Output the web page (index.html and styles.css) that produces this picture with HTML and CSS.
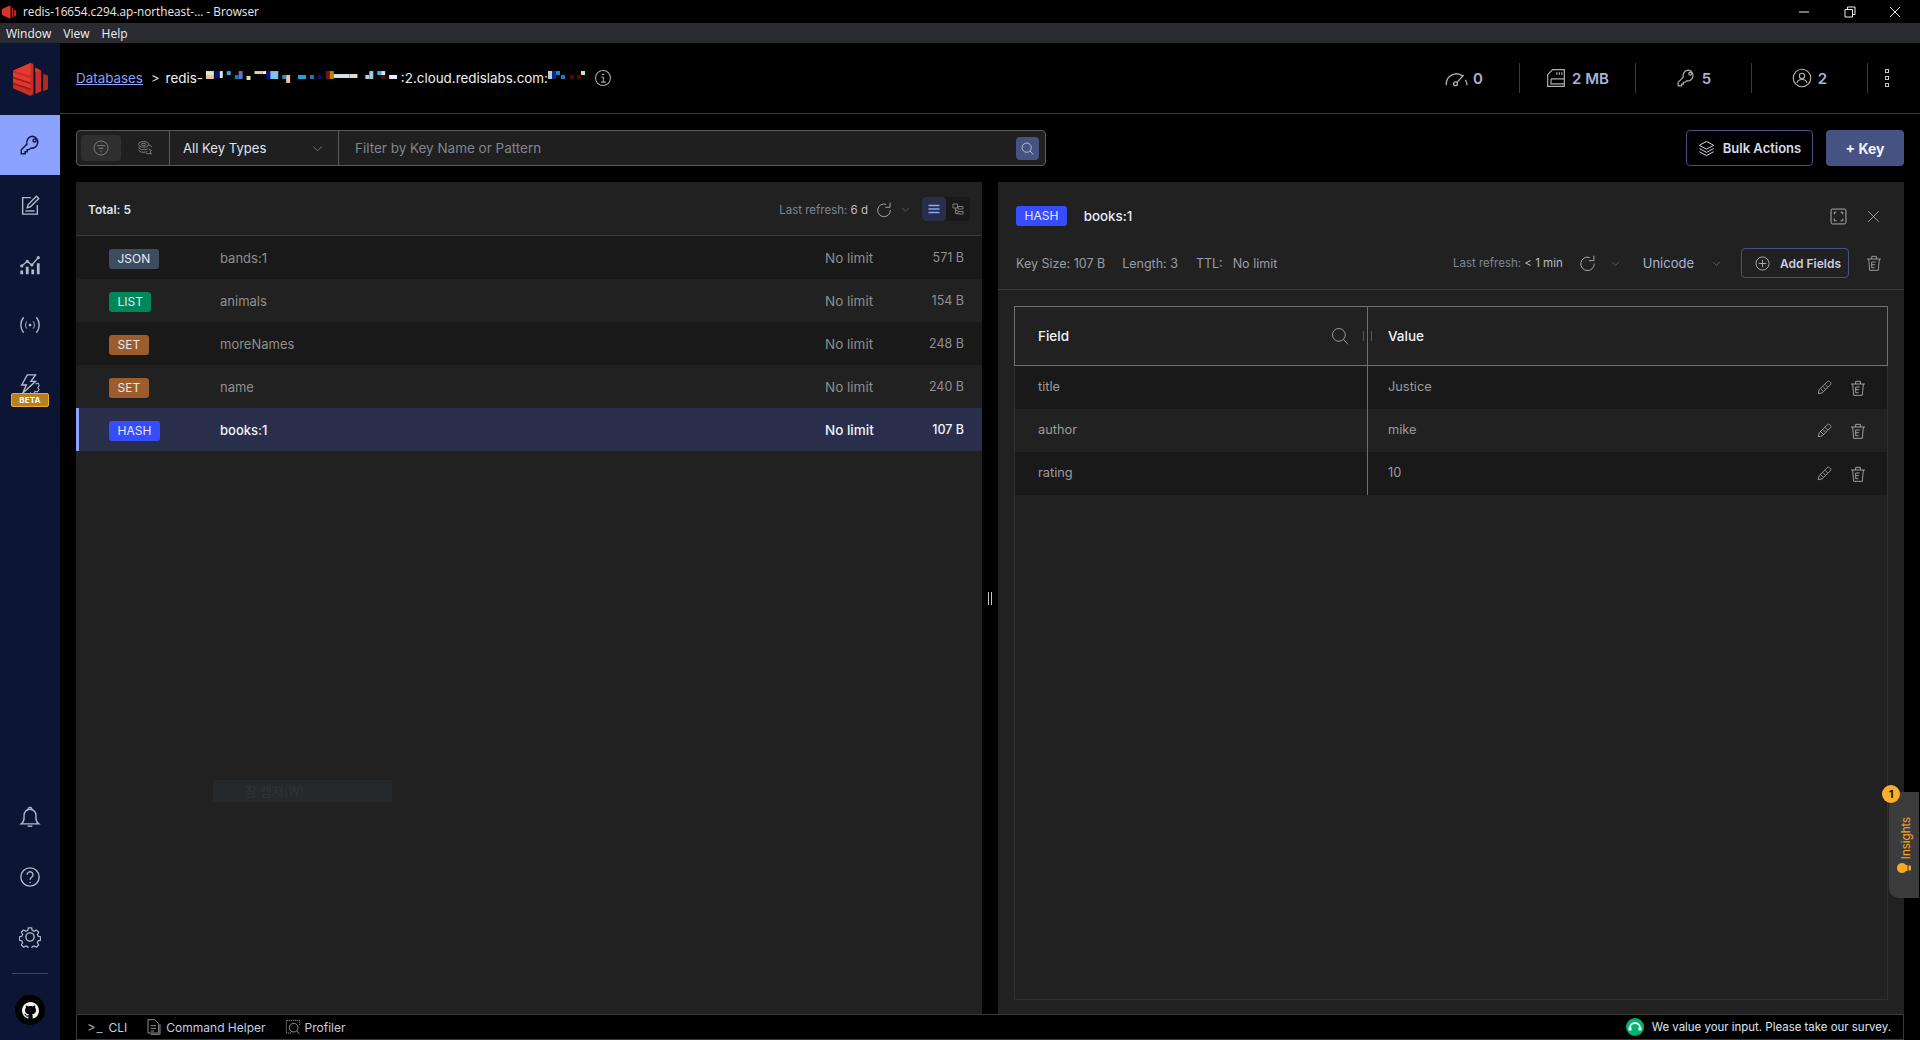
FILE: index.html
```html
<!DOCTYPE html>
<html lang="en">
<head>
<meta charset="utf-8">
<title>Browser</title>
<link rel="stylesheet" href="styles.css">
</head>
<body>
<svg class="defs" xmlns="http://www.w3.org/2000/svg">
  <symbol id="i-key" viewBox="0 0 24 24"><path d="M15 2.500a6.500 6.500 0 0 0-6.200 8.500L2.500 17.300v4.200h4.200v-2.200h2.200v-2.200h2.200l1.700-1.700A6.500 6.500 0 1 0 15 2.500z"/><circle cx="17" cy="7" r="1.700"/></symbol>
  <symbol id="i-edit" viewBox="0 0 24 24"><path d="M13 4H4v18h16v-10"/><path d="M9 15l1-3.500L19 2.500l2.500 2.500-9 9z"/><path d="M7 18.500h10"/></symbol>
  <symbol id="i-chart" viewBox="0 0 24 24"><path d="M3 13l6-5 5 4 7-8"/><circle cx="3" cy="13" r="1"/><circle cx="9" cy="8" r="1"/><circle cx="14" cy="12" r="1"/><circle cx="21" cy="4" r="1"/><path class="thick" d="M3 18v4M9 14v8M15 17v5M21 10v12"/></symbol>
  <symbol id="i-pubsub" viewBox="0 0 24 24"><path d="M5 3.500C1 8.500 1 15.500 5 20.500M19 3.500c4 5 4 12 0 17"/><path d="M8.500 8c-1.800 2.500-1.800 5.500 0 8M15.500 8c1.800 2.500 1.800 5.500 0 8" stroke-width="1"/><circle cx="12" cy="12" r="1.500" class="fill"/></symbol>
  <symbol id="i-bolt" viewBox="0 0 24 24"><path d="M9 1h9l-5 7h5L4 21l4-9H3z"/><path d="M18 11l3-1 1 3-1.500 2 1.500 2-2 2.500-2.500-.5-1.500 2.500h-3l-.5-1.500" stroke-width="1.100"/></symbol>
  <symbol id="i-bell" viewBox="0 0 24 24"><path d="M2.500 19.500c2-1.500 3-3 3-6.500V10a6.500 6.500 0 0 1 13 0v3c0 3.500 1 5 3 6.500z"/><path d="M10 3.500a2 2 0 0 1 4 0"/><path d="M9.500 22h5"/></symbol>
  <symbol id="i-help" viewBox="0 0 24 24"><circle cx="12" cy="12" r="10"/><path d="M8.800 9.500a3.200 3.200 0 1 1 5 2.700c-1.100.8-1.800 1.400-1.800 2.800"/><path d="M12 17.500v1"/></symbol>
  <symbol id="i-gear" viewBox="0 0 24 24"><path d="M10 1.500h4l.7 3 2.300 1 2.700-1.600 2.800 2.800-1.600 2.700 1 2.300 3 .7v4l-3 .7-1 2.300 1.600 2.700-2.800 2.800-2.700-1.600-2.300 1-.7 3h-4l-.7-3-2.300-1-2.700 1.600-2.800-2.800 1.600-2.700-1-2.300-3-.7v-4l3-.7 1-2.300-1.600-2.700 2.800-2.800 2.700 1.600 2.300-1z" transform="translate(12 12) scale(.9) translate(-12 -12.500)"/><circle cx="12" cy="12" r="4.500"/></symbol>
  <symbol id="i-github" viewBox="0 0 16 16"><path class="fill" d="M8 0C3.580 0 0 3.580 0 8c0 3.540 2.290 6.530 5.470 7.590.4.070.55-.17.55-.38 0-.19-.01-.82-.01-1.490-2.010.37-2.530-.49-2.690-.94-.09-.23-.48-.94-.82-1.130-.28-.15-.68-.52-.01-.53.63-.01 1.080.58 1.230.82.72 1.210 1.870.87 2.330.66.07-.52.28-.87.51-1.070-1.780-.2-3.640-.89-3.640-3.950 0-.87.31-1.590.82-2.150-.08-.2-.36-1.020.08-2.120 0 0 .67-.21 2.200.82.64-.18 1.320-.27 2-.27.68 0 1.360.09 2 .27 1.530-1.040 2.200-.82 2.200-.82.44 1.100.16 1.920.08 2.120.51.56.82 1.270.82 2.150 0 3.070-1.870 3.750-3.650 3.950.29.25.54.73.54 1.480 0 1.070-.01 1.930-.01 2.200 0 .21.15.46.55.38A8.013 8.013 0 0 0 16 8c0-4.420-3.580-8-8-8z"/></symbol>
  <symbol id="i-info" viewBox="0 0 24 24"><circle cx="12" cy="12" r="10"/><path d="M10 11h2.500v6.500M9.500 17.500h6"/><path d="M12 6.500v1.500" class="thick"/></symbol>
  <symbol id="i-gauge" viewBox="0 0 24 24"><path d="M1.500 19a10.500 10.500 0 0 1 17-9.500"/><path d="M19.500 8.500l-7 7.500"/><path d="M23 19c-.100-2-.8-4-1.800-5.500"/><circle cx="11" cy="17.500" r="2"/></symbol>
  <symbol id="i-mem" viewBox="0 0 24 24"><path d="M8 2h14v20H2V8z"/><path d="M6 13h16M6 13v6h16"/><path d="M13 5v3M16 5v3M19 5v3"/></symbol>
  <symbol id="i-user" viewBox="0 0 24 24"><circle cx="12" cy="12" r="10.500"/><circle cx="12" cy="9.500" r="3.200"/><path d="M6 18c.5-3 3-4.200 6-4.200s5.500 1.200 6 4.200"/></symbol>
  <symbol id="i-filter" viewBox="0 0 24 24"><circle cx="12" cy="12" r="10.500"/><path d="M6 8.500h12M8.500 12.500h7M11 16.500h2"/></symbol>
  <symbol id="i-coins" viewBox="0 0 24 24"><ellipse cx="10" cy="6.500" rx="7.500" ry="4"/><ellipse cx="10" cy="6.500" rx="3.500" ry="1.700"/><path d="M2.500 10.500c0 2.300 3.500 4 7.500 4 3 0 6-.8 7-2.200M2.500 14.500c0 2.300 3.500 4 7.500 4 2 0 4-.4 5.500-1.200"/><path d="M17.500 7.500c2.800.6 4.500 1.800 4.500 3.200M18 14l3.500 1.500-2 2.500 2.500 2.500H14"/></symbol>
  <symbol id="i-search" viewBox="0 0 24 24"><circle cx="10.500" cy="10.500" r="8.500"/><path d="M16.500 16.500l6 6.500"/></symbol>
  <symbol id="i-chev" viewBox="0 0 24 24"><path d="M3 8l9 9 9-9"/></symbol>
  <symbol id="i-layers" viewBox="0 0 24 24"><path d="M12 2l10 5.500L12 13 2 7.500z"/><path d="M2 12l10 5.500L22 12M2 16.500L12 22l10-5.500"/></symbol>
  <symbol id="i-refresh" viewBox="0 0 24 24"><path d="M15 3.500A9.500 9.500 0 1 0 21.500 12"/><path d="M21 1v7h-7"/></symbol>
  <symbol id="i-list" viewBox="0 0 24 24"><path class="thick" d="M1 5h22M1 12h22M1 19h22"/></symbol>
  <symbol id="i-tree" viewBox="0 0 24 24"><path d="M2 2h9v8H2zM7 10v11h5M7 15h5M12 7h10v5H12zM12 17h10v5H12z"/></symbol>
  <symbol id="i-expand" viewBox="0 0 24 24"><rect x="1.500" y="1.500" width="21" height="21" rx="2"/><path d="M6 9V6h3M15 6h3v3M18 15v3h-3M9 18H6v-3"/></symbol>
  <symbol id="i-x" viewBox="0 0 24 24"><path d="M2 2l20 20M22 2L2 22"/></symbol>
  <symbol id="i-plus" viewBox="0 0 24 24"><circle cx="12" cy="12" r="10.500"/><path d="M12 6v12M6 12h12"/></symbol>
  <symbol id="i-trash" viewBox="0 0 24 24"><path d="M1.500 6h21M8.500 6V2h7v4"/><path d="M4 6l1.500 17h13L20 6"/><path d="M8.500 10.500h6M8.500 10.500v8.500M8.500 14.500h5M8.500 19h4"/></symbol>
  <symbol id="i-pencil" viewBox="0 0 24 24"><path d="M16.500 2.500c1-1 2.500-1 3.500 0l1.500 1.500c1 1 1 2.500 0 3.500L8.500 20.500 2 22l1.500-6.500z"/><path d="M5.500 13.500l5 5M9.500 10.500l4 4M13 7l4 4"/></symbol>
  <symbol id="i-doc" viewBox="0 0 24 24"><path d="M3 1h10l6 6v14H3z"/><path d="M7 10h8M7 14h8M7 18h5"/><path d="M21 8v15H7"/></symbol>
  <symbol id="i-profiler" viewBox="0 0 24 24"><path d="M9 21H2V2h20v8" stroke-dasharray="2 1"/><circle cx="13" cy="13" r="6.500"/><path d="M18 18l4 5"/></symbol>
  <symbol id="i-bulb" viewBox="0 0 14 14"><path class="fill" d="M7 0a5 5 0 0 1 3 9v1.500H4V9a5 5 0 0 1 3-9zM4.500 11.500h5V13a1 1 0 0 1-1 1h-3a1 1 0 0 1-1-1z"/></symbol>
</svg>

<div class="titlebar">
  <svg class="title-logo" viewBox="0 0 36 34"><polygon points="0,9 20,0 22,2 22,32 20,34 0,25" fill="#d5342a"/><polygon points="25,5 29,8 29,30 25,32" fill="#b52a20"/><polygon points="31,11 36,13 36,27 31,29" fill="#b52a20"/></svg>
  <span class="title-text">redis-16654.c294.ap-northeast-... - Browser</span>
  <div class="winctl">
    <svg viewBox="0 0 12 12"><path d="M1 6h10"/></svg>
    <svg viewBox="0 0 12 12"><path d="M1 3.500h7.500V11H1zM3.500 3.500V1H11v7.500H8.500"/></svg>
    <svg viewBox="0 0 12 12"><path d="M1 1l10 10M11 1L1 11"/></svg>
  </div>
</div>
<div class="menubar"><span>Window</span><span>View</span><span>Help</span></div>

<div class="app">
  <nav class="sidebar">
    <div class="logo">
      <svg viewBox="0 0 36 34" class="logo-svg">
        <polygon points="0,8 18,0 21,1 21,32 18,34 0,26" fill="#c92e24"/>
        <polygon points="0,8 18,0 18,13" fill="#e63a2d"/>
        <polygon points="0,14 18,20 18,22 0,16" fill="#8f2018"/>
        <polygon points="0,20 18,26 18,28 0,22" fill="#8f2018"/>
        <polygon points="0,10 18,16 18,20 0,14" fill="#e63a2d"/>
        <polygon points="0,16 18,22 18,26 0,20" fill="#e03629"/>
        <polygon points="23,5 29,8 29,29 23,32" fill="#c92e24"/>
        <polygon points="23,5 29,8 23,9" fill="#e63a2d"/>
        <polygon points="31,11 36,13 36,27 31,29" fill="#b52a20"/>
      </svg>
    </div>
    <div class="nav-item active"><svg class="ico"><use href="#i-key"/></svg></div>
    <div class="nav-item"><svg class="ico"><use href="#i-edit"/></svg></div>
    <div class="nav-item"><svg class="ico"><use href="#i-chart"/></svg></div>
    <div class="nav-item"><svg class="ico"><use href="#i-pubsub"/></svg></div>
    <div class="nav-item beta-item"><svg class="ico"><use href="#i-bolt"/></svg><span class="beta">BETA</span></div>
    <div class="nav-spacer"></div>
    <div class="nav-item"><svg class="ico"><use href="#i-bell"/></svg></div>
    <div class="nav-item"><svg class="ico"><use href="#i-help"/></svg></div>
    <div class="nav-item"><svg class="ico"><use href="#i-gear"/></svg></div>
    <div class="nav-rule"></div>
    <div class="gh"><svg class="gh-ico"><use href="#i-github"/></svg></div>
  </nav>

  <main class="main">
    <header class="header">
      <a class="crumb">Databases</a>
      <span class="crumb-sep">&gt;</span>
      <span class="host">redis-<svg class="mosaic m1" viewBox="0 0 200 12">
        <rect x="3" y="0" width="8" height="4" fill="#dfe6c8"/><rect x="3" y="4" width="8" height="4" fill="#e6c79a"/><rect x="12" y="0" width="5" height="7" fill="#0a0a90"/><rect x="17" y="0" width="3" height="7" fill="#d8e4ee"/><rect x="24" y="0" width="4" height="4" fill="#39a6e0"/><rect x="36" y="0" width="4" height="4" fill="#7a68c0"/><rect x="32" y="4" width="4" height="4" fill="#1f6fc0"/><rect x="36" y="4" width="4" height="4" fill="#4a80c8"/><rect x="44" y="5" width="4" height="4" fill="#e9dcb0"/><rect x="52" y="0" width="8" height="3" fill="#e9cda0"/><rect x="60" y="0" width="4" height="3" fill="#eeeeee"/><rect x="64" y="0" width="4" height="8" fill="#0a0a90"/><rect x="68" y="0" width="8" height="8" fill="#7cc4f0"/><rect x="80" y="4" width="4" height="4" fill="#2a8fd0"/><rect x="84" y="4" width="4" height="8" fill="#eec8a0"/><rect x="96" y="4" width="8" height="4" fill="#2aa0d8"/><rect x="108" y="4" width="4" height="4" fill="#1878c8"/><rect x="116" y="4" width="4" height="4" fill="#0a0a80"/><rect x="124" y="0" width="4" height="8" fill="#7a1010"/><rect x="128" y="0" width="4" height="8" fill="#b88a00"/><rect x="132" y="3" width="16" height="4" fill="#cfe6f0"/><rect x="148" y="3" width="8" height="4" fill="#e8dcc0"/><rect x="164" y="4" width="4" height="4" fill="#bbccdd"/><rect x="168" y="0" width="4" height="8" fill="#9cc8e0"/><rect x="176" y="0" width="4" height="4" fill="#4aa8e0"/><rect x="180" y="0" width="4" height="4" fill="#cfe8f0"/><rect x="180" y="4" width="4" height="4" fill="#5a0a0a"/><rect x="188" y="4" width="8" height="4" fill="#eeeeff"/>
      </svg>:2.cloud.redislabs.com:<svg class="mosaic m2" viewBox="0 0 38 12">
        <rect x="0" y="0" width="4" height="8" fill="#bbccdd"/><rect x="4" y="0" width="4" height="8" fill="#0a2a90"/><rect x="8" y="0" width="4" height="4" fill="#2080d0"/><rect x="13" y="4" width="4" height="4" fill="#1878c8"/><rect x="22" y="4" width="4" height="4" fill="#500808"/><rect x="29" y="4" width="4" height="4" fill="#500808"/><rect x="33" y="0" width="4" height="4" fill="#bfe8d0"/>
      </svg></span>
      <svg class="ico info"><use href="#i-info"/></svg>
      <div class="stats">
        <div class="stat s0"><svg class="ico"><use href="#i-gauge"/></svg><b>0</b></div>
        <div class="stat s1"><svg class="ico"><use href="#i-mem"/></svg><b>2 MB</b></div>
        <div class="stat s2"><svg class="ico"><use href="#i-key"/></svg><b>5</b></div>
        <div class="stat s3"><svg class="ico"><use href="#i-user"/></svg><b>2</b></div>
        <div class="kebab"><i></i><i></i><i></i></div>
      </div>
    </header>

    <section class="toolbar">
      <div class="filter">
        <div class="modes">
          <span class="mode on"><svg class="ico"><use href="#i-filter"/></svg></span>
          <span class="mode"><svg class="ico"><use href="#i-coins"/></svg></span>
        </div>
        <div class="select"><span>All Key Types</span><svg class="ico chev"><use href="#i-chev"/></svg></div>
        <div class="query"><span>Filter by Key Name or Pattern</span><span class="query-btn"><svg class="ico"><use href="#i-search"/></svg></span></div>
      </div>
      <div class="actions">
        <button class="btn-outline"><svg class="ico"><use href="#i-layers"/></svg>Bulk Actions</button>
        <button class="btn-fill">+ Key</button>
      </div>
    </section>

    <section class="content">
      <div class="panel list">
        <div class="list-head">
          <span class="total">Total: 5</span>
          <span class="refresh">Last refresh: <em>6 d</em></span>
          <svg class="ico r-ico"><use href="#i-refresh"/></svg>
          <svg class="ico r-chev"><use href="#i-chev"/></svg>
          <div class="views">
            <span class="view on"><svg class="ico"><use href="#i-list"/></svg></span>
            <span class="view"><svg class="ico"><use href="#i-tree"/></svg></span>
          </div>
        </div>
        <div class="krow"><span class="kb"><span class="badge json">JSON</span></span><span class="kn">bands:1</span><span class="kt">No limit</span><span class="ks">571 B</span></div>
        <div class="krow"><span class="kb"><span class="badge lst">LIST</span></span><span class="kn">animals</span><span class="kt">No limit</span><span class="ks">154 B</span></div>
        <div class="krow"><span class="kb"><span class="badge set">SET</span></span><span class="kn">moreNames</span><span class="kt">No limit</span><span class="ks">248 B</span></div>
        <div class="krow"><span class="kb"><span class="badge set">SET</span></span><span class="kn">name</span><span class="kt">No limit</span><span class="ks">240 B</span></div>
        <div class="krow sel"><span class="kb"><span class="badge hash">HASH</span></span><span class="kn">books:1</span><span class="kt">No limit</span><span class="ks">107 B</span></div>
      </div>

      <div class="split"><i></i><i></i></div>

      <div class="panel detail">
        <div class="detail-head">
          <div class="d-top">
            <span class="badge hash">HASH</span>
            <span class="d-name">books:1</span>
            <svg class="ico d-exp"><use href="#i-expand"/></svg>
            <svg class="ico d-x"><use href="#i-x"/></svg>
          </div>
          <div class="d-meta">
            <span class="m-a">Key Size: 107 B</span>
            <span class="m-b">Length: 3</span>
            <span class="m-c">TTL:</span>
            <span class="m-d">No limit</span>
            <span class="refresh d-ref">Last refresh: <em>&lt; 1 min</em></span>
            <svg class="ico d-r"><use href="#i-refresh"/></svg>
            <svg class="ico d-c"><use href="#i-chev"/></svg>
            <span class="unicode">Unicode</span>
            <svg class="ico d-c2"><use href="#i-chev"/></svg>
            <button class="add"><svg class="ico"><use href="#i-plus"/></svg>Add Fields</button>
            <svg class="ico d-t"><use href="#i-trash"/></svg>
          </div>
        </div>
        <div class="table-wrap">
          <div class="table">
            <div class="thead">
              <div class="th th-f"><span>Field</span><svg class="ico th-s"><use href="#i-search"/></svg><span class="grip"></span></div>
              <div class="th th-v">Value</div>
            </div>
            <div class="trow"><div class="td-f">title</div><div class="td-v"><span>Justice</span><svg class="ico tp"><use href="#i-pencil"/></svg><svg class="ico tt"><use href="#i-trash"/></svg></div></div>
            <div class="trow"><div class="td-f">author</div><div class="td-v"><span>mike</span><svg class="ico tp"><use href="#i-pencil"/></svg><svg class="ico tt"><use href="#i-trash"/></svg></div></div>
            <div class="trow"><div class="td-f">rating</div><div class="td-v"><span>10</span><svg class="ico tp"><use href="#i-pencil"/></svg><svg class="ico tt"><use href="#i-trash"/></svg></div></div>
          </div>
        </div>
      </div>
    </section>

    <footer class="bottom">
      <span class="b-item b-cli"><span class="prompt">&gt;_</span>CLI</span>
      <span class="b-item b-cmd"><svg class="ico"><use href="#i-doc"/></svg>Command Helper</span>
      <span class="b-item"><svg class="ico"><use href="#i-profiler"/></svg>Profiler</span>
      <span class="survey">
        <svg class="survey-ico" viewBox="0 0 18 18"><circle cx="9" cy="9" r="9" fill="#00b36f"/><path d="M4 10a5 5 0 0 1 10 0" fill="none" stroke="#fff" stroke-width="1.800"/><rect x="2.500" y="9.500" width="3" height="3" fill="#fff"/><rect x="12.500" y="9.500" width="3" height="3" fill="#fff"/></svg>
        We value your input. Please take our survey.
      </span>
    </footer>
  </main>
</div>

<div class="ghost-tip">창 캡처(W)</div>
<div class="insights">
  <span class="insights-badge">1</span>
  <span class="insights-label">Insights</span>
  <svg class="insights-bulb"><use href="#i-bulb"/></svg>
</div>
</body>
</html>
```
FILE: styles.css
```css
* { box-sizing: border-box; }
html, body { margin: 0; height: 100%; overflow: hidden; }
body {
  width: 1920px; height: 1040px; position: relative;
  background: #000; color: #dfe1e8;
  font-family: Inter, "Noto Sans", sans-serif; font-size: 13px;
  display: flex; flex-direction: column;
}
.defs { display: none; }
.ico { width: 20px; height: 20px; fill: none; stroke: currentColor; stroke-width: 1.4; flex: none; display: block; }
symbol .fill, .fill { fill: currentColor; stroke: none; }
.thick { stroke-width: 3; }

.titlebar { height: 23px; flex: none; display: flex; align-items: center; background: #000; padding-left: 2px; }
.title-logo { width: 14px; height: 14px; margin-right: 7px; }
.title-text { font-family: "Open Sans", "Noto Sans", sans-serif; font-size: 11.750px; color: #e8e8e8; padding-bottom: 2px; }
.winctl { margin-left: auto; display: flex; gap: 33px; padding-right: 19px; }
.winctl svg { width: 12px; height: 12px; fill: none; stroke: #eee; stroke-width: 1; }
.winctl svg:first-child { margin-right: 1px; }

.menubar { height: 20px; flex: none; background: #2a2b30; display: flex; align-items: center; padding-left: 6px; gap: 12px; font-family: "Open Sans", "Noto Sans", sans-serif; font-size: 12px; color: #eceff4; }

.app { flex: 1; display: flex; min-height: 0; }

.sidebar { width: 60px; flex: none; background: #0d1535; display: flex; flex-direction: column; align-items: center; color: #b4b9cb; }
.logo { height: 72px; flex: none; display: flex; align-items: center; justify-content: center; align-self: stretch; }
.logo-svg { width: 35px; height: 33px; }
.nav-item { height: 60px; flex: none; align-self: stretch; display: flex; align-items: center; justify-content: center; position: relative; }
.nav-item .ico { width: 22px; height: 22px; stroke-width: 1.5; }
.nav-item.active { background: #8ba2ff; color: #0d1535; }
.beta { position: absolute; left: 11px; top: 38px; width: 38px; height: 14px; background: #b67f1f; border: 1px solid #f2a833; border-radius: 2px; color: #fff; font-size: 8px; font-weight: 700; line-height: 12px; text-align: center; letter-spacing: 0.2px; }
.nav-spacer { flex: 1; }
.nav-rule { width: 36px; height: 1px; background: #3a4570; margin: 6px 0 21px; flex: none; }
.gh { width: 30px; height: 30px; border-radius: 50%; background: #000; display: flex; align-items: center; justify-content: center; margin-bottom: 15px; flex: none; color: #fff; }
.gh-ico { width: 17px; height: 17px; color: #f2f2f2; }

.main { flex: 1; min-width: 0; display: flex; flex-direction: column; }

.header { height: 71px; flex: none; border-bottom: 1px solid #3a3a3a; display: flex; align-items: center; padding-left: 16px; font-size: 13.400px; }
.crumb { color: #8ba2ff; text-decoration: underline; }
.crumb-sep { margin: 0 6px 0 8px; color: #dfe1e8; font-size: 13px; }
.host { color: #eef0f6; display: flex; align-items: center; white-space: nowrap; }
.mosaic { height: 12px; display: block; margin-top: -2px; }
.m1 { width: 198px; }
.m2 { width: 38px; }
.info { margin-left: 8px; width: 18px; height: 18px; color: #a9a9a9; }
.stats { margin-left: auto; display: flex; align-items: center; height: 30px; }
.stat { display: flex; align-items: center; justify-content: center; width: 116px; height: 30px; border-right: 1px solid #3a3a3a; gap: 6px; color: #a8b3d6; }
.stat .ico { color: #b0b0b0; width: 20px; height: 20px; }
.stat b { font-weight: 600; font-size: 15px; }
.s0 { width: 105px; padding-right: 6px; gap: 5px; }
.s0 .ico { width: 23px; height: 23px; }
.kebab { width: 52px; display: flex; flex-direction: column; align-items: center; gap: 3px; padding-right: 15px; }
.kebab i { width: 4px; height: 4px; border: 1px solid #c8c8c8; display: block; }

.toolbar { flex: none; display: flex; justify-content: space-between; padding: 16px; }
.filter { width: 970px; height: 36px; display: flex; border: 1px solid #5a5a5a; border-radius: 4px; background: #1f1f1f; }
.modes { width: 93px; display: flex; align-items: center; padding-left: 4px; gap: 4px; border-right: 1px solid #5a5a5a; color: #9a9a9a; }
.mode { width: 40px; height: 26px; border-radius: 4px; display: flex; align-items: center; justify-content: center; }
.mode .ico { width: 16px; height: 16px; stroke-width: 1.100; }
.mode.on { background: #2f2f2f; }
.select { width: 169px; display: flex; align-items: center; justify-content: space-between; padding: 0 15px 0 13px; border-right: 1px solid #5a5a5a; color: #dfe4f2; font-size: 13.100px; }
.chev { width: 11px; height: 11px; color: #a0a0a0; }
.query { flex: 1; display: flex; align-items: center; justify-content: space-between; padding-left: 16px; padding-right: 6px; color: #80858f; font-size: 13.470px; }
.query-btn { width: 23px; height: 23px; background: #465282; border-radius: 4px; display: flex; align-items: center; justify-content: center; color: #d8dbe8; }
.query-btn .ico { width: 13px; height: 13px; }
.actions { display: flex; gap: 13px; }
.btn-outline, .btn-fill, .add { font-family: inherit; cursor: pointer; }
.btn-outline { width: 127px; height: 36px; background: #000; color: #d8dbe8; border: 1px solid #465282; border-radius: 4px; font-size: 13px; font-weight: 600; display: flex; align-items: center; justify-content: center; gap: 8px; padding: 0; }
.btn-outline .ico { width: 17px; height: 17px; }
.btn-fill { width: 78px; height: 36px; background: #465282; color: #f0f2fa; border: 0; border-radius: 4px; font-size: 14px; font-weight: 700; }

.content { flex: 1; min-height: 0; display: flex; padding: 0 16px; }
.panel { flex: 1; min-width: 0; background: #212121; }
.split { width: 16px; flex: none; display: flex; align-items: center; justify-content: center; gap: 2px; }
.split i { width: 1px; height: 13px; background: #c4c4c4; }

.list-head { height: 54px; border-bottom: 1px solid #3a3a3a; display: flex; align-items: center; padding: 2px 0 0 12px; }
.total { font-size: 12px; font-weight: 600; color: #dfe4f2; }
.refresh { font-size: 11.500px; color: #7e8594; white-space: nowrap; }
.refresh em { font-style: normal; color: #b9bcc7; }
.list-head .refresh { margin-left: auto; }
.r-ico { width: 16px; height: 16px; margin-left: 8px; color: #a8a8a8; }
.r-chev { width: 9px; height: 9px; margin-left: 9px; color: #8e8e8e; }
.views { display: flex; margin-left: 12px; margin-right: 12px; margin-top: -2px; border-radius: 4px; overflow: hidden; background: #191919; }
.view { width: 24px; height: 24px; display: flex; align-items: center; justify-content: center; color: #9a9a9a; }
.view .ico { width: 12px; height: 12px; stroke-width: 1.500; }
.view.on { background: #292f4a; color: #8ba2ff; border-radius: 4px; }

.krow { height: 43px; display: flex; align-items: center; color: #8f8f8f; background: #212121; font-size: 13px; border-left: 3px solid transparent; }
.krow:nth-child(even) { background: #191919; }
.krow.sel { background: #292f4a; border-left-color: #8ba2ff; color: #f0f2fa; font-weight: 500; }
.kb { width: 141px; padding-left: 30px; flex: none; display: flex; align-items: center; }
.kb .badge { margin-top: 3px; }
.kn { flex: 1; }
.kt { width: 89px; flex: none; font-size: 13.500px; margin-top: 1px; }
.ks { width: 50px; text-align: right; flex: none; margin-right: 18px; font-size: 12.500px; }
.badge { display: inline-block; height: 20px; line-height: 20px; padding: 0 8.500px; border-radius: 3px; font-size: 12px; color: #e6e9f2; font-weight: 400; }
.json { background: #3f4b5f; }
.lst { background: #008759; }
.set { background: #9c5c2b; }
.hash { background: #364cff; }

.detail { display: flex; flex-direction: column; }
.detail-head { height: 108px; flex: none; border-bottom: 1px solid #3a3a3a; padding: 24px 17px 0 18px; position: relative; }
.d-top { display: flex; align-items: center; height: 20px; margin-right: 1px; }
.d-name { margin-left: 17px; font-weight: 500; color: #e8ebf4; font-size: 13.300px; margin-top: -1px; }
.d-exp { margin-left: auto; width: 17px; height: 17px; color: #b8b8b8; stroke-width: 1.300; }
.d-x { margin-left: 20px; width: 13px; height: 13px; color: #c0c0c0; margin-right: 6px; }
.d-meta { display: flex; align-items: center; height: 30px; margin-top: 22px; color: #9a9ca4; font-size: 12.500px; }
.m-b { margin-left: 17px; }
.m-c { margin-left: 18px; }
.m-d { margin-left: 10px; }
.d-ref { margin-left: auto; }
.d-r { width: 17px; height: 17px; margin-left: 16px; color: #a8a8a8; }
.d-c { width: 9px; height: 9px; margin-left: 15px; color: #8e8e8e; }
.unicode { margin-left: 23px; font-size: 13px; color: #a8b3d6; }
.d-c2 { width: 9px; height: 9px; margin-left: 18px; color: #8e8e8e; }
.add { margin-left: 20px; width: 108px; height: 30px; background: transparent; border: 1px solid #465282; border-radius: 4px; color: #c9cddd; font-size: 12px; font-weight: 600; display: flex; align-items: center; padding: 0 0 0 13px; gap: 10px; }
.add .ico { width: 15px; height: 15px; color: #d0d0d0; stroke-width: 1.200; }
.d-t { width: 16px; height: 16px; margin-left: 17px; margin-right: 5px; color: #a8a8a8; stroke-width: 1.300; }

.table-wrap { flex: 1; min-height: 0; padding: 16px 16px 14px; }
.table { height: 100%; border: 1px solid #303030; }
.thead { display: flex; height: 60px; margin: -1px -1px 0; border: 1px solid #6f6f6f; color: #f0f2fa; font-size: 13.500px; font-weight: 500; }
.th { display: flex; align-items: center; }
.th-f { width: 353px; flex: none; padding-left: 23px; border-right: 1px solid #6f6f6f; position: relative; }
.th-v { padding-left: 20px; }
.th-s { position: absolute; right: 18px; top: 20px; width: 18px; height: 18px; color: #b0b0b0; stroke-width: 1.100; }
.grip { position: absolute; right: -5px; top: 24px; width: 9px; height: 10px; border-left: 1px solid #5a5a5a; border-right: 1px solid #5a5a5a; }
.trow { display: flex; height: 43px; font-size: 12.800px; color: #9c9c9c; align-items: stretch; background: #212121; }
.trow:nth-child(even) { background: #191919; }
.td-f { width: 353px; flex: none; padding: 0 0 2px 23px; border-right: 1px solid #6f6f6f; display: flex; align-items: center; }
.td-v { flex: 1; padding-left: 20px; display: flex; align-items: center; }
.td-v span { flex: 1; padding-bottom: 2px; }
.tp { width: 15px; height: 15px; color: #b0b0b0; stroke-width: 1.300; }
.tt { width: 16px; height: 16px; color: #b0b0b0; margin-left: 18px; margin-right: 21px; stroke-width: 1.300; }

.bottom { height: 26px; flex: none; margin: 0 16px; border: 1px solid #3a3a3a; display: flex; align-items: center; padding-left: 11px; font-size: 12px; color: #c3cde6; background: #000; }
.b-item { display: flex; align-items: center; gap: 4px; margin-right: 19px; white-space: nowrap; }
.b-cli { margin-right: 19px; margin-left: -1px; }
.b-cmd { margin-right: 19px; }
.b-item .ico { width: 16px; height: 16px; color: #b0b0b0; stroke-width: 1.200; }
.prompt { color: #b0b0b0; margin-right: 1px; font-size: 13px; letter-spacing: 1px; }
.survey { margin-left: auto; display: flex; align-items: center; gap: 8px; padding-right: 12px; color: #dbe6f5; font-size: 11.450px; }
.survey-ico { width: 18px; height: 18px; }

.ghost-tip { position: absolute; left: 213px; top: 780px; width: 179px; height: 22px; background: #25292b; color: #2f3336; font-family: "Noto Sans CJK KR", sans-serif; font-size: 13px; line-height: 22px; padding-left: 32px; }
.insights { position: absolute; left: 1889px; top: 792px; width: 30px; height: 106px; background: #3c3c3c; border-radius: 0 0 0 10px; color: #f7a928; }
.insights-badge { position: absolute; left: -7px; top: -7px; width: 18px; height: 18px; border-radius: 50%; background: #ffaf2b; color: #111; font-size: 11px; font-weight: 700; line-height: 18px; text-align: center; }
.insights-label { position: absolute; left: 17px; top: 46px; font-size: 11.500px; line-height: 14px; white-space: nowrap; transform: translate(-50%, -50%) rotate(-90deg); }
.insights-bulb { position: absolute; left: 8px; top: 69px; width: 14px; height: 14px; transform: rotate(-90deg); fill: currentColor; }
```
